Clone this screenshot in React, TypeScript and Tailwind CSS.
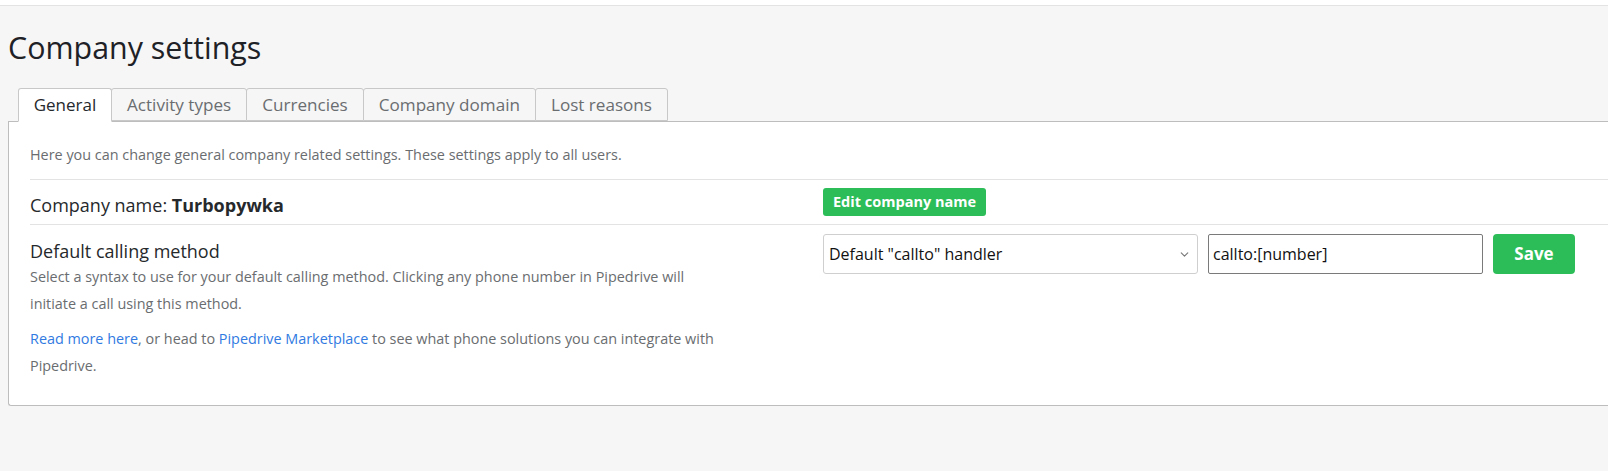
import { ChevronDown } from 'lucide-react';

const tabs = ['General', 'Activity types', 'Currencies', 'Company domain', 'Lost reasons'];

export default function App() {
  return (
    <div className="min-h-[471px] bg-[#f6f6f6] font-['Open_Sans',sans-serif] text-[#26292c]">
      <div className="h-[6px] bg-white border-b border-[#e3e3e3]" />

      <div className="pl-[8px] pt-[24px]">
        <h1 className="text-[30.4px] leading-[36px] font-normal text-[#1e2126]">Company settings</h1>

        <div className="mt-[22px] pl-[10px] flex -mb-px relative z-10">
          {tabs.map((t, i) => (
            <div
              key={t}
              className={
                i === 0
                  ? 'h-[34px] w-[94px] justify-center flex items-center text-[17px] bg-white border border-[#c8c8c8] border-b-white rounded-t-[3px] text-[#26292c]'
                  : 'h-[33px] px-[15px] flex items-center text-[17.1px] bg-[#f6f6f6] border border-[#c8c8c8] -ml-px rounded-t-[3px] text-[#6a6d70]'
              }
            >
              {t}
            </div>
          ))}
        </div>

        <div className="bg-white border border-r-0 border-[#bdbdbd] rounded-bl-[3px] pl-[21px]">
          <p className="pt-[23px] pb-[14px] text-[14.4px] leading-[20px] text-[#6a6d70] border-b border-[#e3e3e3]">
            Here you can change general company related settings. These settings apply to all users.
          </p>

          <div className="flex border-b border-[#e3e3e3] h-[45px]">
            <div className="w-[793px] pt-[13px] text-[18px] leading-[24px]">
              Company name: <span className="font-bold">Turbopywka</span>
            </div>
            <div className="pt-[8px]">
              <button className="h-[28px] px-[10px] rounded-[3px] bg-[#2cbd59] text-white text-[14.5px] font-bold">
                Edit company name
              </button>
            </div>
          </div>

          <div className="flex pb-[26px]">
            <div className="w-[793px] pt-[14px]">
              <div className="text-[18px] leading-[24px]">Default calling method</div>
              <p className="text-[14.4px] leading-[27px] text-[#6a6d70] w-[700px]">
                Select a syntax to use for your default calling method. Clicking any phone number in Pipedrive will initiate a call using this method.
              </p>
              <p className="mt-[8px] text-[14.4px] leading-[27px] text-[#6a6d70] w-[700px]">
                <a className="text-[#317ae2]">Read more here</a>, or head to{' '}
                <a className="text-[#317ae2]">Pipedrive Marketplace</a> to see what phone solutions you can integrate with Pipedrive.
              </p>
            </div>
            <div className="pt-[9px] flex gap-[10px]">
              <div className="w-[375px] h-[40px] border border-[#cfcfcf] rounded-[3px] flex items-center justify-between pl-[5px] pr-[6px] text-[16px] text-[#111]">
                <span>Default "callto" handler</span>
                <ChevronDown className="w-[13px] h-[13px] text-[#777]" strokeWidth={2} />
              </div>
              <div className="w-[275px] h-[40px] border border-[#7a7a7a] rounded-[2px] flex items-center pl-[4px] text-[16px] text-[#111]">
                callto:[number]
              </div>
              <button className="w-[82px] h-[40px] rounded-[4px] bg-[#2cbd59] text-white text-[17px] font-bold">
                Save
              </button>
            </div>
          </div>
        </div>
      </div>
    </div>
  );
}
